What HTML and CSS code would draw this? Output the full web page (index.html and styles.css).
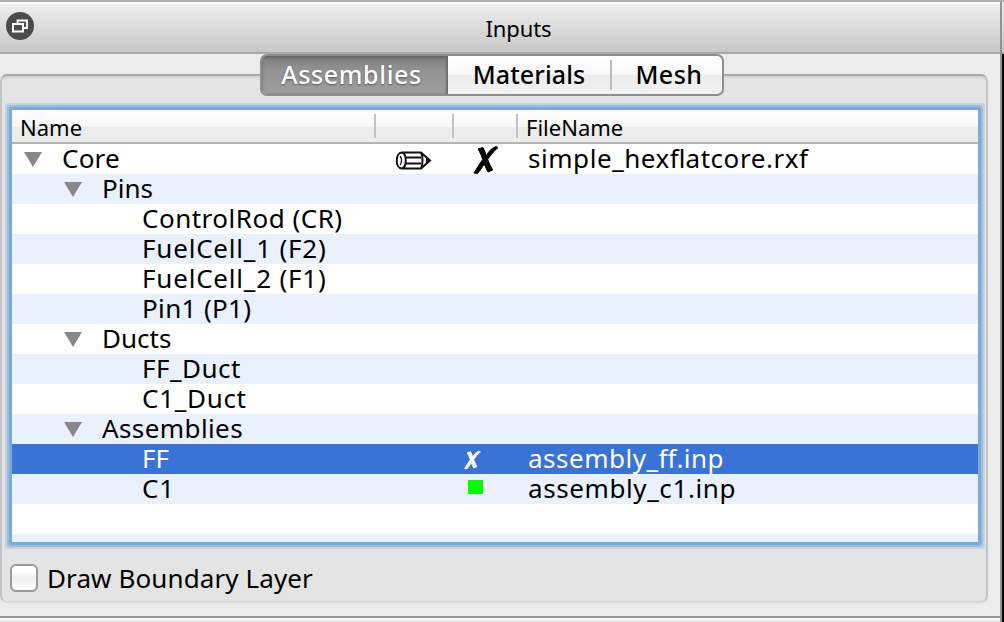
FILE: index.html
```html
<!DOCTYPE html>
<html lang="en">
<head>
<meta charset="utf-8">
<title>Inputs</title>
<link rel="stylesheet" href="styles.css">
</head>
<body>
<div class="window">
  <main class="dock">
    <header class="titlebar">
      <svg class="float-icon" width="30" height="30" viewBox="0 0 30 30">
        <circle cx="15" cy="15" r="14" fill="#4b4b4b"/>
        <path d="M12.500 12V9.500H22V17H19" fill="none" stroke="#fff" stroke-width="1.800"/>
        <rect x="8" y="13" width="10" height="7.500" fill="#4b4b4b" stroke="#fff" stroke-width="2"/>
      </svg>
      <h1 class="title">Inputs</h1>
    </header>
    <section class="content">
      <div class="group">
        <nav class="tabs">
          <button class="tab active"><span>Assemblies</span></button>
          <button class="tab materials"><span>Materials</span></button>
          <button class="tab mesh"><span>Mesh</span></button>
        </nav>
        <div class="tree">
          <div class="row head"><div class="name">Name</div><i></i><div class="edit"></div><i></i><div class="mark"></div><i></i><div class="file">FileName</div></div>
          <div class="row l0"><div class="name"><b class="arrow"></b><span class="core">Core</span></div>
            <div class="edit"><svg width="38" height="22" viewBox="0 0 38 22" fill="none" stroke="#111" stroke-width="2"><path d="M7 2.500H26L35 10.500L26 18.500H7C0 18.500 0 2.500 7 2.500ZM7 2.500C12 4 12 17 7 18.500M26 2.500C28 6 28 15 26 18.500M10 7.500H26M10 13.500H26"/><path d="M5 6C7 8 7 13 5 15" stroke-width="1.300"/><path d="M31 7L36 10.500L31 14Z" fill="#111" stroke="none"/></svg></div>
            <div class="mark"><svg width="26" height="28" viewBox="0 0 26 28" fill="#000" stroke="#000" stroke-width="1"><path d="M5 3L10 1.500C11.500 4 12.500 7 13.200 9.500C15.500 6 18.500 2 23 .5L25 1.500C21 5 17.500 9 14.700 13.500C16 17 17.600 20.500 19.700 24L15 26C13.500 23.500 12.300 20.800 11.300 18C9 21.500 6.500 25.500 4.500 27.500L1 27C3.500 22.500 6.500 18 9.700 13.500C8.600 10 7 6 5 3Z"/></svg></div>
            <div class="file"><span class="f1">simple_hex<span class="lig">fl</span>atcore.rxf</span></div></div>
          <div class="row l1"><div class="name"><b class="arrow"></b><span>Pins</span></div></div>
          <div class="row l2"><div class="name"><span class="cr">ControlRod (CR)</span></div></div>
          <div class="row l2"><div class="name"><span class="fc">FuelCell_1 (F2)</span></div></div>
          <div class="row l2"><div class="name"><span class="fc">FuelCell_2 (F1)</span></div></div>
          <div class="row l2"><div class="name"><span class="pin">Pin1 (P1)</span></div></div>
          <div class="row l1"><div class="name"><b class="arrow"></b><span>Ducts</span></div></div>
          <div class="row l2"><div class="name"><span class="duct">FF_Duct</span></div></div>
          <div class="row l2"><div class="name"><span class="duct c1">C1_Duct</span></div></div>
          <div class="row l1"><div class="name"><b class="arrow"></b><span class="asm">Assemblies</span></div></div>
          <div class="row l2 selected"><div class="name"><span>FF</span></div><div class="edit"></div>
            <div class="mark small"><svg width="17" height="20" viewBox="0 0 26 28" fill="#fff" stroke="#fff" stroke-width="1.500"><path d="M5 3L10 1.500C11.500 4 12.500 7 13.200 9.500C15.500 6 18.500 2 23 .5L25 1.500C21 5 17.500 9 14.700 13.500C16 17 17.600 20.500 19.700 24L15 26C13.500 23.500 12.300 20.800 11.300 18C9 21.500 6.500 25.500 4.500 27.500L1 27C3.500 22.500 6.500 18 9.700 13.500C8.600 10 7 6 5 3Z"/></svg></div>
            <div class="file"><span class="f2">assembly_<span class="lig">ff</span>.inp</span></div></div>
          <div class="row l2"><div class="name"><span class="c1">C1</span></div><div class="edit"></div><div class="mark square"><b></b></div><div class="file"><span class="f3">assembly_c1.inp</span></div></div>
          <div class="row"></div>
          <div class="row rest"></div>
        </div>
        <label class="check"><b class="box"></b><span>Draw Boundary Layer</span></label>
      </div>
    </section>
    <footer class="footer"></footer>
  </main>
  <aside class="edge"></aside>
</div>
</body>
</html>
```
FILE: styles.css
```css
* { box-sizing: border-box; }
body { margin: 0; background: #ececec; color: #000; font-family: "Noto Sans", "Open Sans", sans-serif; }
.window { display: flex; width: 1004px; height: 622px; overflow: hidden; border-top: 2px solid #b0b0b0; }
.dock { width: 1000px; height: 620px; display: flex; flex-direction: column; }
.edge { width: 4px; border-left: 2px solid #929292; background: linear-gradient(#eee, #c8c8c8 50px, #a8a8a8 50px, #a8a8a8 52px, #000 52px); }
.titlebar { height: 52px; flex: none; display: flex; border-top: 2px solid #fff; border-bottom: 2px solid #aaa; background: linear-gradient(#eee, #c8c8c8); }
.float-icon { margin: 7px 0 0 5px; flex: none; }
.title { flex: 1; margin: 0 0 0 2px; text-align: center; font-size: 22px; line-height: 48px; font-weight: 400; letter-spacing: -.1px; }
.content { height: 562px; padding: 20px 12px 0 0; background: #ececec; }
.group { height: 529px; border: 2px solid #c5c5c5; border-top-color: #aaa; border-bottom-color: #d8d8d8; border-radius: 7px; background: #e4e4e4; box-shadow: inset 0 3px 2px -1px #d2d2d2; }
.tabs { display: flex; width: 464px; height: 42px; margin: -22px 0 0 258px; border: 2px solid #8e8e8e; border-radius: 7px; overflow: hidden; background: linear-gradient(#fff, #f8f8f8 48%, #ececec 50%, #f2f2f2); }
.tab { border: 0; padding: 0; background: none; color: #000; font: 500 25px/37px "Noto Sans", sans-serif; white-space: nowrap; display: flex; justify-content: center; }
.active { width: 186px; padding-right: 7px; color: #fff; letter-spacing: .65px; background: linear-gradient(#7b7b7b, #929292 35%, #9e9e9e); box-shadow: inset 0 2px 3px #646464, inset -2px 0 2px #707070; text-shadow: 0 1px 2px #555; }
.materials { width: 163px; padding-right: 1px; letter-spacing: .1px; }
.mesh { flex: 1; position: relative; padding-left: 5px; letter-spacing: .5px; }
.mesh::before { content: ""; position: absolute; left: -1px; top: 4px; width: 2px; height: 30px; background: #bcbcbc; }
.tree { width: 966px; height: 432px; margin: 14px 0 0 10px; background: #fff; overflow: hidden; box-shadow: 0 0 0 3px #7aaad6, 0 0 0 5px #9bbedd, 0 0 1px 7px #c5d2dd; border-radius: 1px; }
.row { height: 30px; display: flex; font-size: 26px; line-height: 28px; white-space: nowrap; }
.row:nth-child(odd) { background: #eaf1fe; }
.head.row { height: 34px; border-bottom: 2px solid #b4b4b4; background: linear-gradient(#fff, #f7f7f7 52%, #ebebeb 55%, #eee); font-size: 22px; line-height: 35px; }
.head i { width: 2px; height: 24px; margin: 4px 0 0 -1px; background: #c3c3c3; }
.name { width: 363px; display: flex; flex: none; }
.head .name { padding-left: 8px; }
.edit { width: 78px; flex: none; }
.mark { width: 64px; flex: none; }
.head .edit { width: 77px; }
.head .mark { width: 63px; }
.head .file { padding-left: 8px; }
.row:not(.head) .edit { padding: 6px 0 0 20px; line-height: 0; }
.row:not(.head) .mark { padding: 2px 0 0 20px; line-height: 0; }
.row:not(.head) .file { padding-left: 11px; }
.row:not(.head) .small { padding: 6px 0 0 11px; }
.row:not(.head) .square { padding: 6px 0 0 15px; }
.square b { display: block; width: 15px; height: 14px; background: #0f0; }
.core { letter-spacing: .2px; }
.cr { letter-spacing: .5px; }
.fc { letter-spacing: .8px; }
.pin { letter-spacing: .35px; }
.duct { letter-spacing: .5px; }
.c1 { letter-spacing: .7px; }
.asm { letter-spacing: .4px; }
.f1 { letter-spacing: .55px; }
.f2 { letter-spacing: .5px; }
.f3 { letter-spacing: .6px; }
.lig { letter-spacing: 0; }
.l0 .name { padding-left: 12px; }
.l1 .name { padding-left: 52px; }
.l2 .name { padding-left: 130px; }
.arrow { width: 18px; height: 15px; margin: 8px 20px 0 0; background: #888; clip-path: polygon(0 0, 100% 0, 50% 100%); }
.row.selected { background: #3973d6; color: #fff; }
.check { display: flex; height: 32px; margin: 21px 0 0 8px; font-size: 26px; line-height: 30px; letter-spacing: .1px; }
.box { width: 28px; height: 28px; margin: 1px 9px 0 0; border: 2px solid #999; border-radius: 6px; background: linear-gradient(#fff 20%, #eee 50%, #fff); }
.footer { height: 6px; flex: none; border-top: 2px solid #999; background: linear-gradient(#fff 2px, #ececec 2px); }
```
